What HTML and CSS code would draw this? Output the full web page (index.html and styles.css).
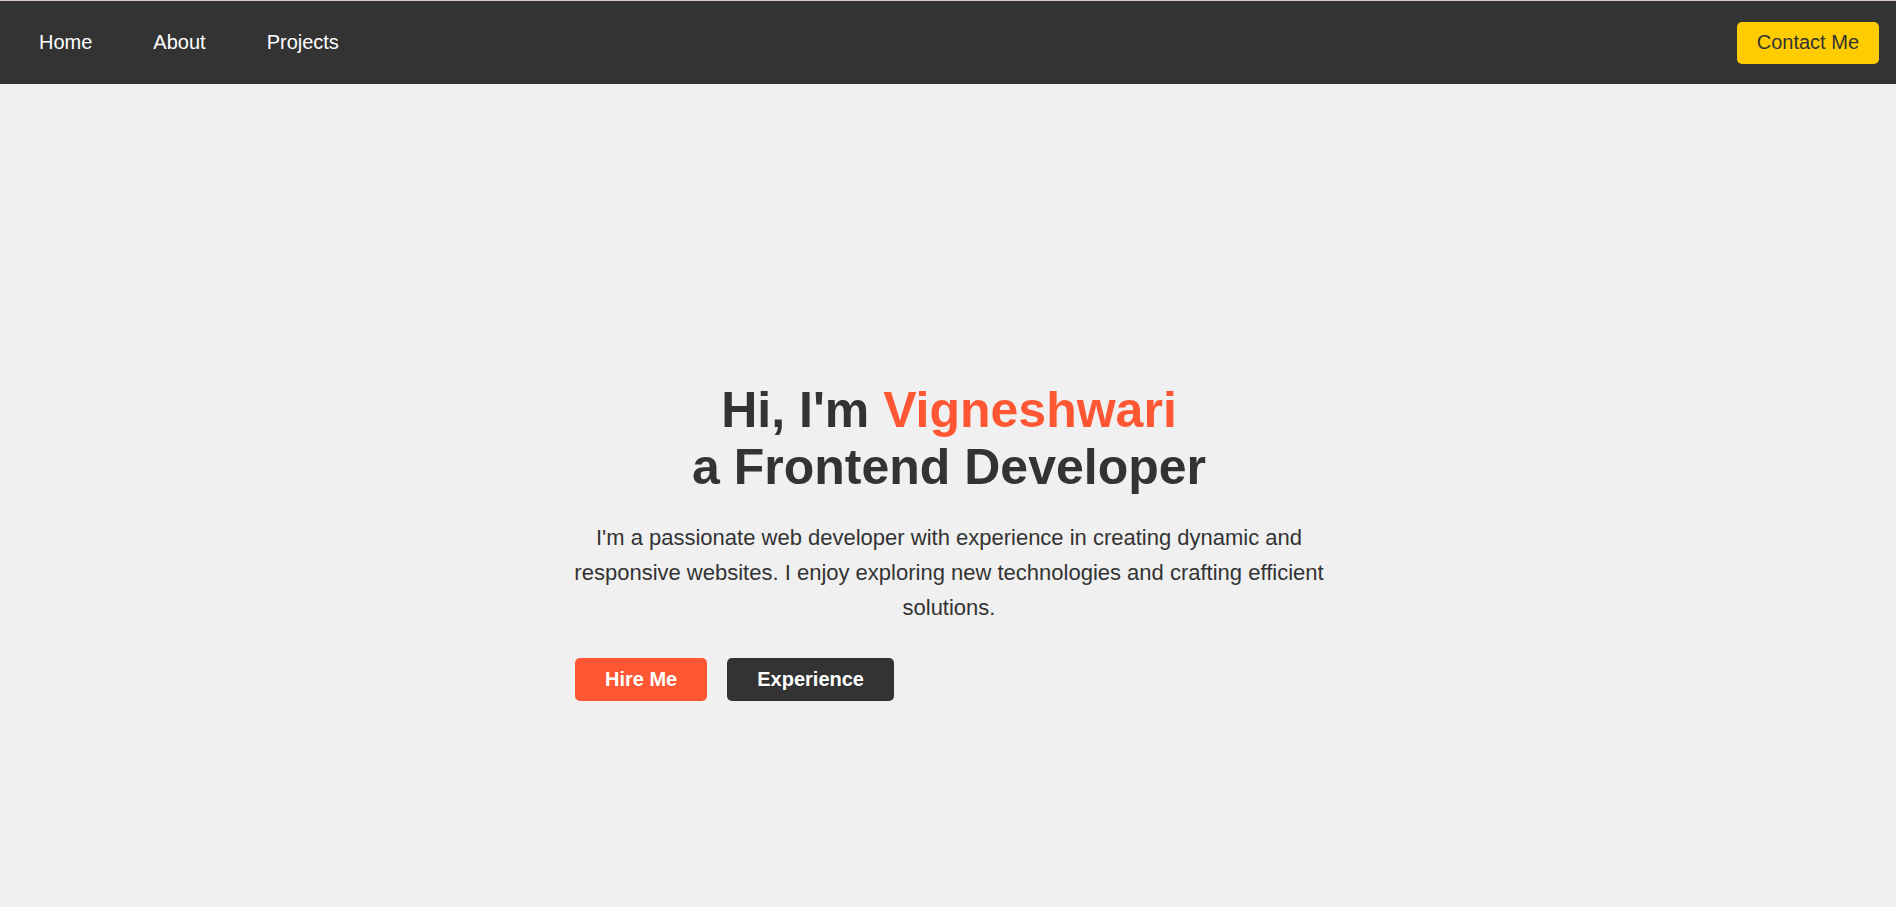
FILE: index.html
```html
<!DOCTYPE html>
<html lang="en">
<head>
<meta charset="UTF-8">
<title>Vigneshwari - Portfolio</title>
<link rel="stylesheet" href="styles.css">
</head>
<body>
<nav class="navbar">
  <ul class="nav-links">
    <li><a href="#" class="nav-link">Home</a></li>
    <li><a href="#" class="nav-link">About</a></li>
    <li><a href="#" class="nav-link">Projects</a></li>
  </ul>
  <a href="#" class="contact-btn">Contact Me</a>
</nav>
<main class="hero">
  <div class="hero-content">
    <h1 class="hero-title">Hi, I'm <span class="highlight">Vigneshwari</span><br>a Frontend Developer</h1>
    <p class="hero-text">I'm a passionate web developer with experience in creating dynamic and responsive websites. I enjoy exploring new technologies and crafting efficient solutions.</p>
    <div class="hero-buttons">
      <a href="#" class="btn btn-primary">Hire Me</a>
      <a href="#" class="btn btn-dark">Experience</a>
    </div>
  </div>
</main>
</body>
</html>
```
FILE: styles.css
```css
* {
  box-sizing: border-box;
}

html, body {
  margin: 0;
  padding: 0;
  overflow: hidden;
}

body {
  background: #f0f0f0;
  font-family: "Liberation Sans", Arial, sans-serif;
  color: #333333;
}

.navbar {
  height: 84px;
  background: #333333;
  border-top: 1px solid #d9c9ce;
  display: flex;
  align-items: center;
  justify-content: space-between;
  padding: 0 17px 0 39px;
}

.nav-links {
  list-style: none;
  margin: 0;
  padding: 0;
  display: flex;
  gap: 61px;
}

.nav-link {
  color: #ffffff;
  text-decoration: none;
  font-size: 20px;
}

.contact-btn {
  background: #ffcc00;
  color: #333333;
  text-decoration: none;
  font-size: 20px;
  padding: 9px 20px 10px;
  border-radius: 5px;
  line-height: 23px;
}

.hero {
  min-height: 100vh;
  display: flex;
  align-items: center;
  justify-content: center;
  padding: 8px 0 0 2px;
}

.hero-content {
  max-width: 750px;
  width: 100%;
  text-align: center;
}

.hero-title {
  font-size: 50px;
  font-weight: bold;
  line-height: 57px;
  margin: 0 0 24px;
  color: #333333;
}

.highlight {
  color: #ff5733;
}

.hero-text {
  font-size: 22px;
  line-height: 35px;
  margin: 0 0 33px;
  color: #333333;
}

.hero-buttons {
  display: flex;
  gap: 20px;
  justify-content: flex-start;
  padding-left: 1px;
}

.btn {
  display: inline-block;
  font-size: 20px;
  font-weight: bold;
  line-height: 23px;
  padding: 10px 30px;
  border-radius: 5px;
  color: #ffffff;
  text-decoration: none;
}

.btn-primary {
  background: #ff5733;
}

.btn-dark {
  background: #333333;
}
```
